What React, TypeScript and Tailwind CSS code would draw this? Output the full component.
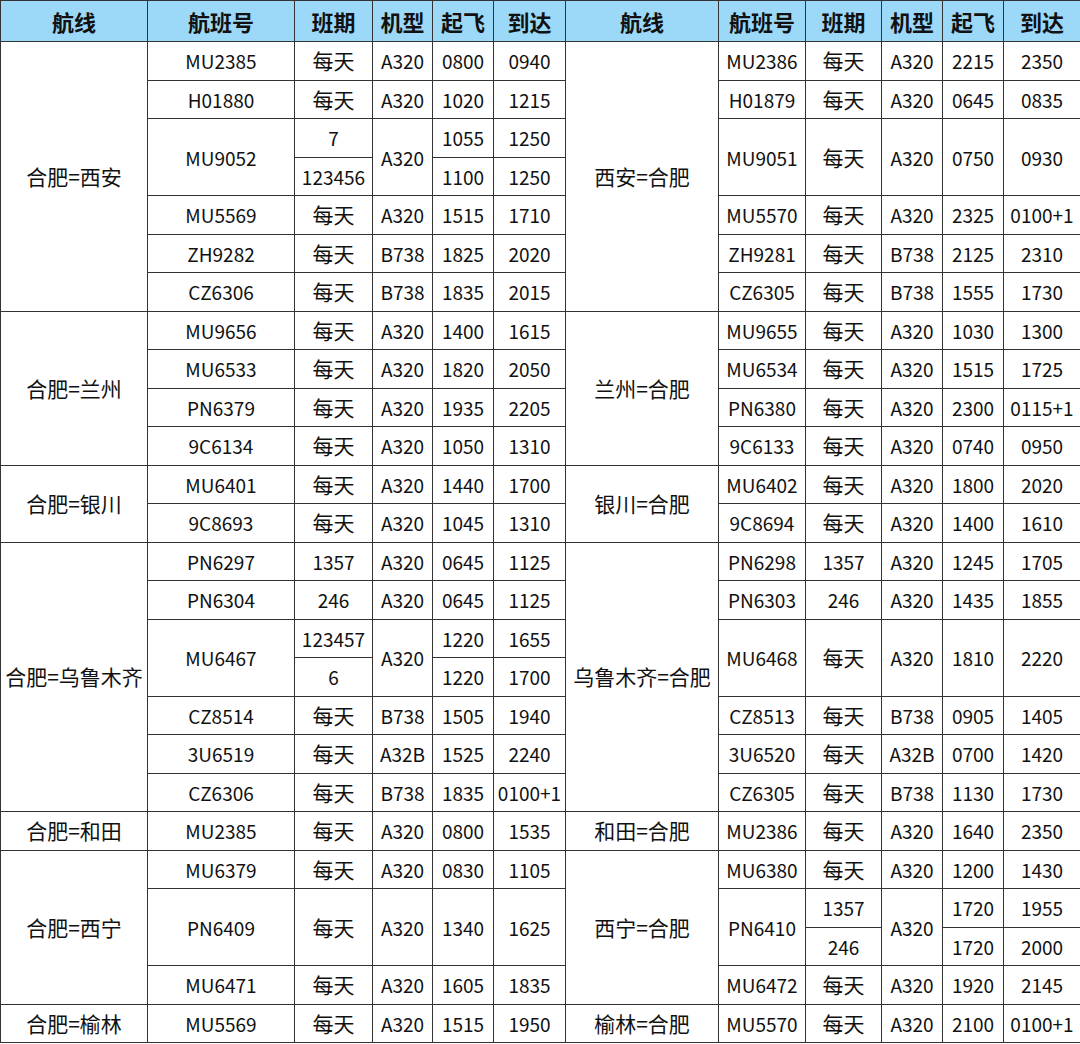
import React from "react";

type Cell = { t: string; rs?: number };

// each row: left half cells followed by right half cells (cells covered by a rowspan are left out)
const rows: Cell[][] = [
  // 西安
  [{ t: "合肥=西安", rs: 7 }, { t: "MU2385" }, { t: "每天" }, { t: "A320" }, { t: "0800" }, { t: "0940" },
   { t: "西安=合肥", rs: 7 }, { t: "MU2386" }, { t: "每天" }, { t: "A320" }, { t: "2215" }, { t: "2350" }],
  [{ t: "H01880" }, { t: "每天" }, { t: "A320" }, { t: "1020" }, { t: "1215" },
   { t: "H01879" }, { t: "每天" }, { t: "A320" }, { t: "0645" }, { t: "0835" }],
  [{ t: "MU9052", rs: 2 }, { t: "7" }, { t: "A320", rs: 2 }, { t: "1055" }, { t: "1250" },
   { t: "MU9051", rs: 2 }, { t: "每天", rs: 2 }, { t: "A320", rs: 2 }, { t: "0750", rs: 2 }, { t: "0930", rs: 2 }],
  [{ t: "123456" }, { t: "1100" }, { t: "1250" }],
  [{ t: "MU5569" }, { t: "每天" }, { t: "A320" }, { t: "1515" }, { t: "1710" },
   { t: "MU5570" }, { t: "每天" }, { t: "A320" }, { t: "2325" }, { t: "0100+1" }],
  [{ t: "ZH9282" }, { t: "每天" }, { t: "B738" }, { t: "1825" }, { t: "2020" },
   { t: "ZH9281" }, { t: "每天" }, { t: "B738" }, { t: "2125" }, { t: "2310" }],
  [{ t: "CZ6306" }, { t: "每天" }, { t: "B738" }, { t: "1835" }, { t: "2015" },
   { t: "CZ6305" }, { t: "每天" }, { t: "B738" }, { t: "1555" }, { t: "1730" }],
  // 兰州
  [{ t: "合肥=兰州", rs: 4 }, { t: "MU9656" }, { t: "每天" }, { t: "A320" }, { t: "1400" }, { t: "1615" },
   { t: "兰州=合肥", rs: 4 }, { t: "MU9655" }, { t: "每天" }, { t: "A320" }, { t: "1030" }, { t: "1300" }],
  [{ t: "MU6533" }, { t: "每天" }, { t: "A320" }, { t: "1820" }, { t: "2050" },
   { t: "MU6534" }, { t: "每天" }, { t: "A320" }, { t: "1515" }, { t: "1725" }],
  [{ t: "PN6379" }, { t: "每天" }, { t: "A320" }, { t: "1935" }, { t: "2205" },
   { t: "PN6380" }, { t: "每天" }, { t: "A320" }, { t: "2300" }, { t: "0115+1" }],
  [{ t: "9C6134" }, { t: "每天" }, { t: "A320" }, { t: "1050" }, { t: "1310" },
   { t: "9C6133" }, { t: "每天" }, { t: "A320" }, { t: "0740" }, { t: "0950" }],
  // 银川
  [{ t: "合肥=银川", rs: 2 }, { t: "MU6401" }, { t: "每天" }, { t: "A320" }, { t: "1440" }, { t: "1700" },
   { t: "银川=合肥", rs: 2 }, { t: "MU6402" }, { t: "每天" }, { t: "A320" }, { t: "1800" }, { t: "2020" }],
  [{ t: "9C8693" }, { t: "每天" }, { t: "A320" }, { t: "1045" }, { t: "1310" },
   { t: "9C8694" }, { t: "每天" }, { t: "A320" }, { t: "1400" }, { t: "1610" }],
  // 乌鲁木齐
  [{ t: "合肥=乌鲁木齐", rs: 7 }, { t: "PN6297" }, { t: "1357" }, { t: "A320" }, { t: "0645" }, { t: "1125" },
   { t: "乌鲁木齐=合肥", rs: 7 }, { t: "PN6298" }, { t: "1357" }, { t: "A320" }, { t: "1245" }, { t: "1705" }],
  [{ t: "PN6304" }, { t: "246" }, { t: "A320" }, { t: "0645" }, { t: "1125" },
   { t: "PN6303" }, { t: "246" }, { t: "A320" }, { t: "1435" }, { t: "1855" }],
  [{ t: "MU6467", rs: 2 }, { t: "123457" }, { t: "A320", rs: 2 }, { t: "1220" }, { t: "1655" },
   { t: "MU6468", rs: 2 }, { t: "每天", rs: 2 }, { t: "A320", rs: 2 }, { t: "1810", rs: 2 }, { t: "2220", rs: 2 }],
  [{ t: "6" }, { t: "1220" }, { t: "1700" }],
  [{ t: "CZ8514" }, { t: "每天" }, { t: "B738" }, { t: "1505" }, { t: "1940" },
   { t: "CZ8513" }, { t: "每天" }, { t: "B738" }, { t: "0905" }, { t: "1405" }],
  [{ t: "3U6519" }, { t: "每天" }, { t: "A32B" }, { t: "1525" }, { t: "2240" },
   { t: "3U6520" }, { t: "每天" }, { t: "A32B" }, { t: "0700" }, { t: "1420" }],
  [{ t: "CZ6306" }, { t: "每天" }, { t: "B738" }, { t: "1835" }, { t: "0100+1" },
   { t: "CZ6305" }, { t: "每天" }, { t: "B738" }, { t: "1130" }, { t: "1730" }],
  // 和田
  [{ t: "合肥=和田" }, { t: "MU2385" }, { t: "每天" }, { t: "A320" }, { t: "0800" }, { t: "1535" },
   { t: "和田=合肥" }, { t: "MU2386" }, { t: "每天" }, { t: "A320" }, { t: "1640" }, { t: "2350" }],
  // 西宁
  [{ t: "合肥=西宁", rs: 4 }, { t: "MU6379" }, { t: "每天" }, { t: "A320" }, { t: "0830" }, { t: "1105" },
   { t: "西宁=合肥", rs: 4 }, { t: "MU6380" }, { t: "每天" }, { t: "A320" }, { t: "1200" }, { t: "1430" }],
  [{ t: "PN6409", rs: 2 }, { t: "每天", rs: 2 }, { t: "A320", rs: 2 }, { t: "1340", rs: 2 }, { t: "1625", rs: 2 },
   { t: "PN6410", rs: 2 }, { t: "1357" }, { t: "A320", rs: 2 }, { t: "1720" }, { t: "1955" }],
  [{ t: "246" }, { t: "1720" }, { t: "2000" }],
  [{ t: "MU6471" }, { t: "每天" }, { t: "A320" }, { t: "1605" }, { t: "1835" },
   { t: "MU6472" }, { t: "每天" }, { t: "A320" }, { t: "1920" }, { t: "2145" }],
  // 榆林
  [{ t: "合肥=榆林" }, { t: "MU5569" }, { t: "每天" }, { t: "A320" }, { t: "1515" }, { t: "1950" },
   { t: "榆林=合肥" }, { t: "MU5570" }, { t: "每天" }, { t: "A320" }, { t: "2100" }, { t: "0100+1" }],
];

const widths = [147, 147, 78, 60, 61, 72, 153, 87, 76, 61, 61, 77];
const heads = ["航线", "航班号", "班期", "机型", "起飞", "到达", "航线", "航班号", "班期", "机型", "起飞", "到达"];

const cjk = /[\u4e00-\u9fff]/;

export default function App() {
  return (
    <div
      className="w-[1080px] h-[1044px] bg-white text-[#111]"
      style={{ fontFamily: '"Noto Sans CJK SC", "Noto Sans", sans-serif' }}
    >
      <table className="w-[1080px] table-fixed border-collapse border border-[#333]">
        <colgroup>
          {widths.map((w, i) => (
            <col key={i} style={{ width: w }} />
          ))}
        </colgroup>
        <thead>
          <tr className="h-[41px] bg-[#9cd8f8]">
            {heads.map((h, i) => (
              <th key={i} className="border border-[#333] p-0 text-center text-[22px] font-bold leading-none">
                {h}
              </th>
            ))}
          </tr>
        </thead>
        <tbody>
          {rows.map((r, i) => (
            <tr key={i} className="h-[38.5px]">
              {r.map((c, j) => (
                <td
                  key={j}
                  rowSpan={c.rs}
                  className={
                    "border border-[#333] p-0 text-center align-middle leading-none whitespace-nowrap " +
                    (cjk.test(c.t) ? "text-[21px]" : "text-[19px]")
                  }
                >
                  {c.t}
                </td>
              ))}
            </tr>
          ))}
        </tbody>
      </table>
    </div>
  );
}
